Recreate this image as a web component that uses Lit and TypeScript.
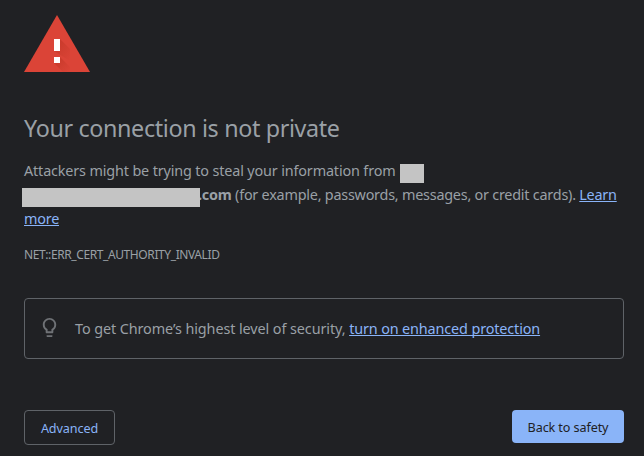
import { LitElement, html, css } from "lit";
import { customElement } from "lit/decorators.js";

@customElement("app-root")
export class AppRoot extends LitElement {
  static styles = css`
    :host {
      display: block;
      box-sizing: border-box;
      width: 644px;
      height: 456px;
      padding: 15px 20px 0 24px;
      overflow: hidden;
      background: #202124;
      color: #9aa0a6;
      font-family: "Noto Sans", "Open Sans", sans-serif;
      white-space: nowrap;
    }
    .warning { display: block; width: 66px; height: 57px; }
    h1 {
      margin: 40px 0 15px;
      font-size: 23.3px;
      line-height: 32px;
      font-weight: 400;
      letter-spacing: -0.35px;
    }
    p { margin: 0; font-size: 14.4px; line-height: 24px; }
    .line { display: flex; height: 24px; }
    .gap { white-space: pre; }
    .l1 { letter-spacing: -0.15px; width: 371px; }
    .l2 { letter-spacing: -0.23px; }
    .l2 b { margin-left: -2px; }
    .tip { letter-spacing: -0.09px; }
    .tip a { letter-spacing: -0.13px; }
    .short { width: 24px; height: 19px; margin: 5px 0 0 5px; background: #c4c4c4; }
    .long { position: relative; z-index: 1; width: 178px; height: 19px; margin: 5px 0 0 -2px; background: #c4c4c4; flex: none; }
    a { color: #8ab4f8; text-decoration: underline; text-underline-offset: 1px; text-decoration-thickness: 1px; text-decoration-skip-ink: none; }
    .code { margin-top: 14px; font-size: 12px; line-height: 20px; height: 20px; letter-spacing: -0.4px; }
    .box {
      box-sizing: border-box;
      display: flex;
      align-items: center;
      height: 61px;
      margin-top: 33px;
      padding: 0 0 0 12.5px;
      border: 1px solid #5f6368;
      border-radius: 4px;
    }
    .box svg { width: 23px; height: 23px; margin: 0 14.5px 2px 0; }
    .buttons { display: flex; justify-content: space-between; margin-top: 51px; }
    button {
      box-sizing: border-box;
      padding: 2px 0 0;
      font: 400 12.6px/20px "Noto Sans", "Open Sans", sans-serif;
      border-radius: 4px;
      letter-spacing: -0.1px;
    }
    .advanced { width: 91px; height: 35px; color: #8ab4f8; background: transparent; border: 1px solid #5f6368; }
    .back { width: 112px; height: 33px; color: #202124; background: #8ab4f8; border: 0; }
  `;

  render() {
    return html`
      <svg class="warning" viewBox="0 0 66 57">
        <defs>
          <linearGradient id="shade" x1="0" y1="0" x2="1" y2="1">
            <stop offset="0" stop-color="#a52714" stop-opacity=".4" />
            <stop offset="1" stop-color="#a52714" stop-opacity="0" />
          </linearGradient>
        </defs>
        <path d="M33 0 66 57H0Z" fill="#db4437" />
        <path d="M36 24 46 34V46L30 36Z" fill="url(#shade)" />
        <path d="M36 42 46 52V57H39L30 48Z" fill="url(#shade)" />
        <path d="M30 24h6v12h-6zM30 42h6v6h-6z" fill="#fff" />
      </svg>
      <h1>Your connection is not private</h1>
      <p>
        <span class="line"><span class="l1">Attackers might be trying to steal your information from</span><span class="short"></span></span>
        <span class="line"><span class="long"></span><span class="l2 gap"><b>.com</b> (for example, passwords, messages, or credit cards). <a>Learn</a></span></span>
        <span class="line"><a class="l2">more</a></span>
      </p>
      <div class="code">NET::ERR_CERT_AUTHORITY_INVALID</div>
      <div class="box">
        <svg viewBox="0 0 24 24" fill="#6f7276">
          <path d="M9 21c0 .55.45 1 1 1h4c.55 0 1-.45 1-1v-1H9v1zm3-19C8.140 2 5 5.140 5 9c0 2.380 1.190 4.470 3 5.740V17c0 .55.45 1 1 1h6c.55 0 1-.45 1-1v-2.260c1.810-1.270 3-3.360 3-5.740 0-3.860-3.140-7-7-7zm2.850 11.100l-.85.6V16h-4v-2.300l-.85-.6C7.800 12.160 7 10.630 7 9c0-2.760 2.240-5 5-5s5 2.240 5 5c0 1.630-.8 3.160-2.150 4.100z" />
        </svg>
        <p class="tip">To get Chrome’s highest level of security, <a>turn on enhanced protection</a></p>
      </div>
      <div class="buttons">
        <button class="advanced">Advanced</button>
        <button class="back">Back to safety</button>
      </div>
    `;
  }
}
